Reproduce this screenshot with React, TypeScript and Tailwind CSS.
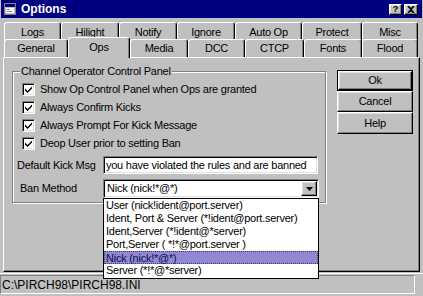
import React from "react";

const raised =
  "border border-t-white border-l-white border-r-black border-b-black shadow-[inset_-1px_-1px_0_#808080,inset_1px_1px_0_#dfdfdf]";
const sunken =
  "border border-t-[#808080] border-l-[#808080] border-r-white border-b-white shadow-[inset_1px_1px_0_#000,inset_-1px_-1px_0_#dfdfdf]";

function Tab({ label, cls }: { label: string; cls: string }) {
  return (
    <div
      className={`flex items-center justify-center border-t border-l border-r border-t-white border-l-white border-r-black rounded-t-[3px] shadow-[inset_-1px_0_0_#808080] bg-[#c0c0c0] ${cls}`}
    >
      {label}
    </div>
  );
}

function Check({ label }: { label: string }) {
  return (
    <div className="flex items-center h-[18px] pl-[9px]">
      <div className={`w-[13px] h-[13px] bg-white ${sunken} flex items-center justify-center`}>
        <svg width="9" height="9" viewBox="0 0 9 9">
          <path d="M1 3.5 L3.5 6 L8 1.5 L8 3.5 L3.5 8 L1 5.5 Z" fill="#000" />
        </svg>
      </div>
      <span className="ml-[5px]">{label}</span>
    </div>
  );
}

const items = [
  "User (nick!ident@port.server)",
  "Ident, Port & Server (*!ident@port.server)",
  "Ident,Server (*!ident@*server)",
  "Port,Server ( *!*@port.server )",
  "Nick (nick!*@*)",
  "Server (*!*@*server)",
];

export default function App() {
  return (
    <div className="w-[423px] h-[296px] bg-[#c0c0c0] overflow-hidden flex flex-col font-['Liberation_Sans',Arial,sans-serif] text-[11px] tracking-[-0.25px] text-black leading-none">
      {/* Title bar */}
      <div className="h-[18px] mx-[1px] bg-[#000080] flex items-center pl-[3px] pr-[4px]">
        <svg width="12" height="12" viewBox="0 0 12 12" className="shrink-0">
          <rect x="0.5" y="0.5" width="11" height="11" fill="#c0c0c0" stroke="#808080" />
          <rect x="1" y="1" width="10" height="3" fill="#000080" />
          <rect x="2" y="5" width="8" height="5" fill="#fff" />
          <rect x="3" y="6" width="3" height="1" fill="#808080" />
          <rect x="3" y="8" width="5" height="1" fill="#808080" />
        </svg>
        <span className="ml-[5px] text-white font-bold text-[12px] tracking-[0px]">Options</span>
        <div className="ml-auto flex gap-[2px]">
          <div className={`w-[13px] h-[11px] bg-[#c0c0c0] ${raised} flex items-center justify-center text-[9px] font-bold tracking-[0px]`}>
            ?
          </div>
          <div className={`w-[14px] h-[11px] bg-[#c0c0c0] ${raised} flex items-center justify-center`}>
            <svg width="8" height="7" viewBox="0 0 8 7">
              <path d="M1 0 L4 3 L7 0 M1 7 L4 4 L7 7 M1 0 L7 7 M7 0 L1 7" stroke="#000" strokeWidth="1.6" fill="none" />
            </svg>
          </div>
        </div>
      </div>

      {/* Tabs */}
      <div className="mt-[4px] pl-[4px] flex flex-col">
        <div className="flex h-[17px]">
          <Tab label="Logs" cls="w-[57px] h-[19px]" />
          <Tab label="Hilight" cls="w-[58px] h-[19px]" />
          <Tab label="Notify" cls="w-[58px] h-[19px]" />
          <Tab label="Ignore" cls="w-[58px] h-[19px]" />
          <Tab label="Auto Op" cls="w-[67px] h-[19px]" />
          <Tab label="Protect" cls="w-[60px] h-[19px]" />
          <Tab label="Misc" cls="w-[56px] h-[19px]" />
        </div>
        <div className="flex h-[18px] relative">
          <Tab label="General" cls="w-[64px] h-[18px] pb-[1px]" />
          <div className="w-[62px] h-[21px] -mt-[2px] relative z-10 flex items-start justify-center pt-[4px] bg-[#c0c0c0] border-t border-l border-r border-t-white border-l-white border-r-black rounded-t-[3px] shadow-[inset_-1px_0_0_#808080]">
            Ops
          </div>
          <Tab label="Media" cls="w-[58px] h-[18px] pb-[1px]" />
          <Tab label="DCC" cls="w-[57px] h-[18px] pb-[1px]" />
          <Tab label="CTCP" cls="w-[59px] h-[18px] pb-[1px]" />
          <Tab label="Fonts" cls="w-[58px] h-[18px] pb-[1px]" />
          <Tab label="Flood" cls="w-[56px] h-[18px] pb-[1px]" />
        </div>
      </div>

      {/* Panel */}
      <div className="ml-[3px] w-[417px] h-[215px] border border-t-white border-l-white border-r-black border-b-black shadow-[inset_-1px_-1px_0_#808080] flex">
        {/* Group box */}
        <div className="ml-[8px] mt-[13px] w-[314px] h-[132px] relative border border-[#808080] shadow-[1px_1px_0_#fff,inset_1px_1px_0_#fff] flex flex-col">
          <span className="absolute left-[7px] -top-[7px] px-[1px] bg-[#c0c0c0] leading-[13px]">
            Channel Operator Control Panel
          </span>
          <div className="mt-[8px] flex flex-col">
            <Check label="Show Op Control Panel when Ops are granted" />
            <Check label="Always Confirm Kicks" />
            <Check label="Always Prompt For Kick Message" />
            <Check label="Deop User prior to setting Ban" />
          </div>
          <div className="mt-[4px] flex items-center h-[18px]">
            <span className="w-[90px] pl-[4px]">Default Kick Msg</span>
            <div className={`w-[215px] h-[18px] bg-white ${sunken} flex items-center pl-[2px]`}>
              you have violated the rules and are banned
            </div>
          </div>
          <div className="mt-[5px] flex items-center h-[19px]">
            <span className="w-[90px] pl-[7px]">Ban Method</span>
            <div className={`relative w-[216px] h-[19px] bg-white ${sunken} flex items-center pl-[3px]`}>
              <span>Nick (nick!*@*)</span>
              <div className={`ml-auto mr-[1px] w-[16px] h-[15px] bg-[#c0c0c0] ${raised} flex items-center justify-center`}>
                <svg width="7" height="4" viewBox="0 0 7 4">
                  <path d="M0 0 H7 L3.5 4 Z" fill="#000" />
                </svg>
              </div>
              <div className="absolute -left-[1px] top-[18px] w-[216px] h-[81px] bg-white border border-black z-20 flex flex-col">
                {items.map((it, i) => (
                  <div
                    key={it}
                    className={
                      i === 4
                        ? "h-[13px] leading-[13px] pl-[1px] bg-[#9088d4] text-[#10104a] border border-dotted border-[#404060]"
                        : "h-[13px] leading-[13px] pl-[2px]"
                    }
                  >
                    {it}
                  </div>
                ))}
              </div>
            </div>
          </div>
        </div>

        {/* Buttons */}
        <div className="ml-[11px] mt-[12px] w-[76px] flex flex-col">
          <div className="h-[21px] border border-black">
            <div className={`h-full ${raised} flex items-center justify-center`}>Ok</div>
          </div>
          <div className={`h-[21px] ${raised} flex items-center justify-center`}>Cancel</div>
          <div className={`h-[22px] ${raised} flex items-center justify-center`}>Help</div>
        </div>
      </div>

      {/* Status bar */}
      <div className="mt-[1px] border-t border-white flex flex-1 pt-[1px] pb-[2px]">
        <div className="w-[415px] border border-t-[#808080] border-l-[#808080] border-r-white border-b-white flex items-center pl-[1px] text-[12px] tracking-[0px]">
          C:\PIRCH98\PIRCH98.INI
        </div>
      </div>
    </div>
  );
}
